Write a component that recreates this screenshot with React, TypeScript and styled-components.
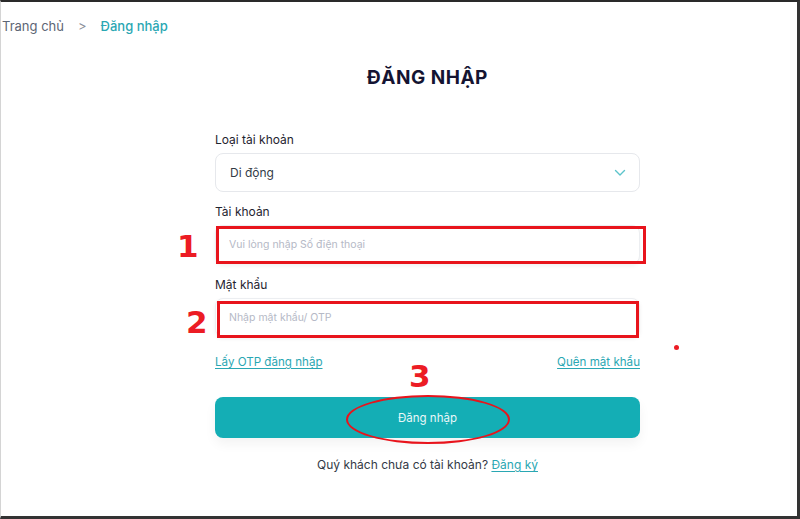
import styled, { createGlobalStyle } from "styled-components";

const Global = createGlobalStyle`
  * { box-sizing: border-box; }
  html, body { margin: 0; padding: 0; background: #fff; }
  body { font-family: "Inter", "Roboto", sans-serif; color: #222; }
`;

const teal = "#14aeb5";

const Frame = styled.div`
  position: relative;
  width: 800px;
  height: 519px;
  overflow: hidden;
  background: #fff;
  border-top: 2px solid #2a2a2a;
  border-right: 3px solid #333;
  border-bottom: 3px solid #333;
  border-left: 1px solid #d4d4d4;
`;

const Breadcrumb = styled.nav`
  display: flex;
  align-items: center;
  gap: 14px;
  padding: 15px 0 0 1px;
  font-size: 13px;
  line-height: 18px;
`;

const Crumb = styled.span<{ $active?: boolean }>`
  color: ${(p) => (p.$active ? "#2aa7b3" : "#5d6675")};
  font-weight: ${(p) => (p.$active ? 500 : 400)};
`;

const Sep = styled.span`
  color: #8a8f99;
  font-size: 13px;
`;

const Column = styled.main`
  width: 425px;
  margin-left: 214px;
  display: flex;
  flex-direction: column;
`;

const Title = styled.h1`
  margin: 31px 0 0;
  text-align: center;
  font-size: 19px;
  line-height: 24px;
  font-weight: 700;
  letter-spacing: 0.5px;
  color: #141432;
`;

const Field = styled.div<{ $top: number }>`
  margin-top: ${(p) => p.$top}px;
  display: flex;
  flex-direction: column;
  gap: 4px;
`;

const Label = styled.label`
  font-size: 12px;
  line-height: 18px;
  color: #1f2430;
`;

const Select = styled.div`
  height: 39px;
  border: 1px solid #e6e8ec;
  border-radius: 8px;
  display: flex;
  align-items: center;
  justify-content: space-between;
  padding: 0 13px 0 14px;
  font-size: 12px;
  color: #333a46;
`;

const Input = styled.input`
  height: 39px;
  width: 100%;
  border: 1px solid #eceef1;
  border-radius: 8px;
  box-shadow: 0 2px 4px rgba(0, 0, 0, 0.06);
  padding: 0 13px;
  font-family: inherit;
  font-size: 10.5px;
  color: #333;
  outline: none;
  &::placeholder { color: #b5b9c6; }
`;

const LinkRow = styled.div`
  margin-top: 16px;
  display: flex;
  justify-content: space-between;
  font-size: 11.6px;
  line-height: 18px;
`;

const Link = styled.a`
  color: #2aa7b3;
  text-decoration: underline;
  text-underline-offset: 2px;
  cursor: pointer;
`;

const Button = styled.button`
  margin-top: 26px;
  height: 41px;
  border: none;
  border-radius: 8px;
  background: ${teal};
  color: #e9f7f8;
  font-family: inherit;
  font-size: 11.5px;
  box-shadow: 0 6px 12px rgba(0, 0, 0, 0.05);
`;

const Footer = styled.p`
  margin: 18px 0 0;
  text-align: center;
  font-size: 12px;
  line-height: 18px;
  color: #333a46;
`;

/* red annotations painted over the screenshot */
const Mark = styled.div<{ $x: number; $y: number; $w: number; $h: number }>`
  position: absolute;
  left: ${(p) => p.$x}px;
  top: ${(p) => p.$y}px;
  width: ${(p) => p.$w}px;
  height: ${(p) => p.$h}px;
  border: 3px solid #e8141c;
  pointer-events: none;
`;

const Ellipse = styled(Mark)`
  border-width: 2.5px;
  border-radius: 50%;
`;

const Num = styled.span<{ $x: number; $y: number }>`
  position: absolute;
  left: ${(p) => p.$x}px;
  top: ${(p) => p.$y}px;
  font-family: "DejaVu Sans", "Liberation Sans", sans-serif;
  font-weight: 700;
  font-size: 31px;
  line-height: 30px;
  color: #ec1c24;
`;

const Dot = styled.span`
  position: absolute;
  left: 673px;
  top: 343px;
  width: 5px;
  height: 5px;
  border-radius: 50%;
  background: #ec1c24;
`;

const Chevron = () => (
  <svg width="12" height="8" viewBox="0 0 12 8" fill="none">
    <path d="M1.5 1.5 L6 6 L10.5 1.5" stroke="#5cc4cb" strokeWidth="1.4" strokeLinecap="round" strokeLinejoin="round" />
  </svg>
);

export default function App() {
  return (
    <>
      <Global />
      <Frame>
        <Breadcrumb>
          <Crumb>Trang chủ</Crumb>
          <Sep>&gt;</Sep>
          <Crumb $active>Đăng nhập</Crumb>
        </Breadcrumb>
        <Column>
          <Title>ĐĂNG NHẬP</Title>
          <Field $top={41}>
            <Label>Loại tài khoản</Label>
            <Select>
              <span>Di động</span>
              <Chevron />
            </Select>
          </Field>
          <Field $top={11}>
            <Label>Tài khoản</Label>
            <Input placeholder="Vui lòng nhập Số điện thoại" />
          </Field>
          <Field $top={12}>
            <Label>Mật khẩu</Label>
            <Input placeholder="Nhập mật khẩu/ OTP" />
          </Field>
          <LinkRow>
            <Link>Lấy OTP đăng nhập</Link>
            <Link>Quên mật khẩu</Link>
          </LinkRow>
          <Button>Đăng nhập</Button>
          <Footer>
            Quý khách chưa có tài khoản? <Link>Đăng ký</Link>
          </Footer>
        </Column>

        <Num $x={176} $y={229}>1</Num>
        <Mark $x={215} $y={224} $w={430} $h={38} />
        <Num $x={185} $y={305}>2</Num>
        <Mark $x={216} $y={299} $w={422} $h={37} />
        <Num $x={408} $y={359}>3</Num>
        <Ellipse $x={345} $y={393} $w={164} $h={49} />
        <Dot />
      </Frame>
    </>
  );
}
